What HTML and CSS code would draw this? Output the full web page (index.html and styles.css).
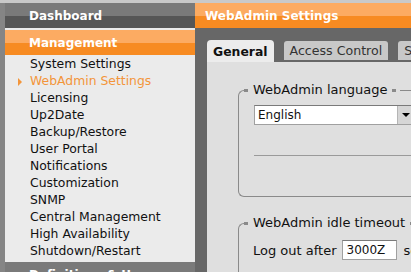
FILE: index.html
```html
<!DOCTYPE html>
<html lang="en">
<head>
    <meta charset="UTF-8">
    <title>WebAdmin Settings</title>
    <link rel="stylesheet" href="styles.css">
</head>
<body>
    <div class="shell">
        <nav class="sidebar">
            <div class="nav-head dark">Dashboard</div>
            <div class="nav-head orange">Management</div>
            <ul class="nav-list">
                <li>System Settings</li>
                <li class="active">WebAdmin Settings</li>
                <li>Licensing</li>
                <li>Up2Date</li>
                <li>Backup/Restore</li>
                <li>User Portal</li>
                <li>Notifications</li>
                <li>Customization</li>
                <li>SNMP</li>
                <li>Central Management</li>
                <li>High Availability</li>
                <li>Shutdown/Restart</li>
            </ul>
            <div class="nav-head dark">Definitions &amp; Users</div>
        </nav>

        <main class="panel">
            <div class="panel-title">WebAdmin Settings</div>
            <div class="panel-body">
                <div class="tabs">
                    <div class="tab active">General</div>
                    <div class="tab">Access Control</div>
                    <div class="tab">Security</div>
                </div>
                <div class="tab-content">
                    <fieldset class="box">
                        <legend>WebAdmin language</legend>
                        <div class="select">
                            <span class="select-value">English</span>
                            <span class="select-button"></span>
                        </div>
                        <div class="rule"></div>
                    </fieldset>

                    <fieldset class="box">
                        <legend>WebAdmin idle timeout</legend>
                        <div class="field-row">
                            <span>Log out after</span>
                            <input type="text" class="text-input" value="3000Z">
                            <span>seconds</span>
                        </div>
                    </fieldset>
                </div>
            </div>
        </main>
    </div>
</body>
</html>
```

FILE: styles.css
```css
body {
    margin: 0;
    background: #c9c9c9;
    font-family: "DejaVu Sans", Verdana, sans-serif;
    font-size: 12px;
    color: #111;
}
.shell {
    display: flex;
    height: 269px;
    border-top: 3px solid #c9c9c9;
    overflow: hidden;
}
.sidebar {
    width: 190px;
    flex-shrink: 0;
    border-left: 5px solid #858585;
    background: #ebebeb;
}
.nav-head {
    height: 25px;
    line-height: 26px;
    padding-left: 24px;
    font-weight: bold;
    font-size: 12px;
    color: #fff;
    white-space: nowrap;
}
.nav-head.dark {
    background: linear-gradient(#7a7a7a 0, #7a7a7a 52%, #565656 52%, #565656 100%);
}
.nav-head.orange {
    margin-top: 2px;
    background: linear-gradient(#fcab62 0, #fcab62 52%, #f78b22 52%, #f78b22 100%);
}
.nav-list {
    list-style: none;
    margin: 0;
    padding: 0 0 3px 0;
}
.nav-list li {
    height: 17px;
    line-height: 18px;
    padding-left: 25px;
    font-size: 12.4px;
    white-space: nowrap;
}
.nav-list li.active {
    color: #f3953a;
}
.nav-list li.active:before {
    content: "";
    display: inline-block;
    width: 0;
    height: 0;
    margin-left: -12px;
    margin-right: 8px;
    border-top: 4px solid transparent;
    border-bottom: 4px solid transparent;
    border-left: 4px solid #f3953a;
    vertical-align: -1px;
}
.panel {
    flex: 1;
    min-width: 0;
    display: flex;
    flex-direction: column;
    background: #676767;
}
.panel-title {
    height: 25px;
    line-height: 26px;
    padding-left: 10px;
    font-weight: bold;
    font-size: 12px;
    color: #fff;
    white-space: nowrap;
    background: linear-gradient(#fcab62 0, #fcab62 52%, #f78b22 52%, #f78b22 100%);
}
.panel-body {
    flex: 1;
    display: flex;
    flex-direction: column;
    padding: 12px 0 0 12px;
}
.tabs {
    display: flex;
    align-items: flex-end;
    gap: 10px;
    height: 22px;
    white-space: nowrap;
}
.tab {
    height: 19px;
    line-height: 20px;
    margin-bottom: 2px;
    padding: 0 6px;
    border-radius: 3px 3px 0 0;
    background: #c8c8c8;
    color: #333;
    font-size: 12.6px;
}
.tab.active {
    height: 22px;
    line-height: 23px;
    margin-bottom: 0;
    padding: 0 6px;
    border-radius: 4px 4px 0 0;
    background: #ececec;
    color: #111;
    font-size: 12.4px;
    font-weight: bold;
}
.tab-content {
    flex: 1;
    background: #dfdfdf;
    padding: 20px 0 0 31px;
}
.box {
    margin: 0;
    padding: 0 0 0 15px;
    border: 1px solid #8a8a8a;
    border-right: none;
    border-radius: 6px 0 0 6px;
    font-size: 13px;
}
.box + .box {
    margin-top: 18px;
}
.box legend {
    padding: 0 4px 0 0;
    margin-left: -10px;
    line-height: 16px;
    white-space: nowrap;
    color: #111;
}
.box legend:before,
.box legend:after {
    content: "";
    display: inline-block;
    width: 4px;
    height: 3px;
    background: #8a8a8a;
    vertical-align: middle;
}
.box legend:before {
    margin-right: 5px;
}
.box legend:after {
    margin-left: 5px;
}
.select {
    display: flex;
    width: 158px;
    height: 18px;
    margin-top: 7px;
    border: 1px solid #a0a0a0;
    border-top-color: #7a7a7a;
    background: #fff;
}
.select-value {
    flex: 1;
    line-height: 18px;
    padding-left: 3px;
    font-size: 12px;
}
.select-button {
    width: 15px;
    border-left: 1px solid #b5b5b5;
    background: #d6d6d6;
    display: flex;
    align-items: center;
    justify-content: center;
}
.select-button:before {
    content: "";
    border-top: 4px solid #000;
    border-left: 4px solid transparent;
    border-right: 4px solid transparent;
}
.rule {
    height: 1px;
    margin-top: 30px;
    margin-bottom: 40px;
    background: #9a9a9a;
}
.field-row {
    display: flex;
    align-items: center;
    gap: 5px;
    margin-top: 9px;
    margin-left: -1px;
    white-space: nowrap;
    height: 20px;
    margin-bottom: 20px;
}
.text-input {
    width: 49px;
    height: 18px;
    padding: 0 0 0 4px;
    border: 1px solid #a0a0a0;
    border-top-color: #7a7a7a;
    background: #fff;
    font-family: "DejaVu Sans", Verdana, sans-serif;
    font-size: 12px;
    color: #111;
    margin-right: 2px;
}
```
